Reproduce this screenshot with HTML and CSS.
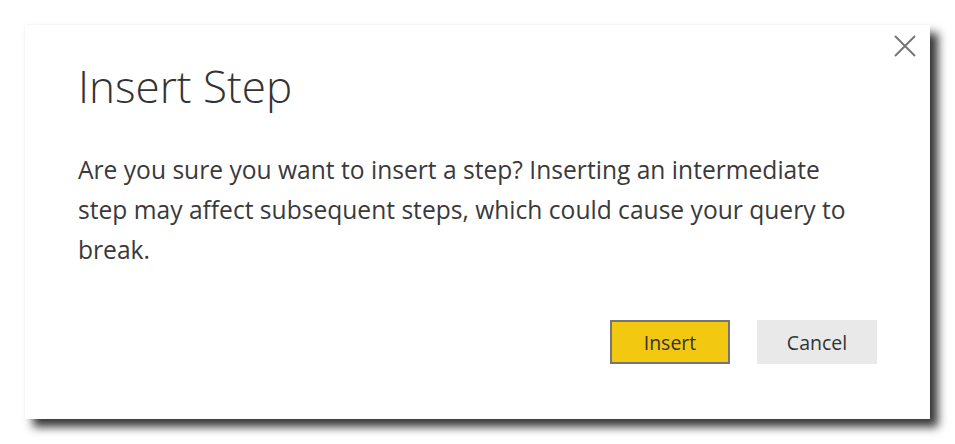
FILE: index.html
```html
<!DOCTYPE html>
<html lang="en">
<head>
<meta charset="utf-8">
<title>Insert Step</title>
<link rel="stylesheet" href="styles.css">
</head>
<body>
<div class="dialog">
  <button class="close" aria-label="Close">
    <svg width="22" height="22" viewBox="0 0 22 22"><path d="M1 1 L21 21 M21 1 L1 21" stroke="#767676" stroke-width="2" fill="none"/></svg>
  </button>
  <h1 class="title">Insert Step</h1>
  <p class="message">Are you sure you want to insert a step? Inserting an intermediate step may affect subsequent steps, which could cause your query to break.</p>
  <div class="actions">
    <button class="btn btn-primary">Insert</button>
    <button class="btn btn-secondary">Cancel</button>
  </div>
</div>
</body>
</html>
```
FILE: styles.css
```css
html, body {
  margin: 0;
  background: #ffffff;
}
body {
  padding: 25px;
  font-family: "Open Sans", "Noto Sans", sans-serif;
  color: #333333;
}
.dialog {
  position: relative;
  box-sizing: border-box;
  width: 905px;
  height: 394px;
  background: #ffffff;
  padding: 0 53px 55px 53px;
  display: flex;
  flex-direction: column;
  box-shadow: 0 0 2px rgba(0,0,0,0.06), 8px 8px 9px rgba(0,0,0,0.78);
}
.close {
  position: absolute;
  top: 10px;
  right: 14px;
  width: 22px;
  height: 22px;
  padding: 0;
  border: 0;
  background: transparent;
}
.close svg { display: block; }
.title {
  margin: 31px 0 0 0;
  font-weight: 300;
  font-size: 44px;
  line-height: 60px;
  color: #333333;
}
.message {
  margin: 34px 0 0 0;
  font-size: 24.6px;
  line-height: 40px;
  color: #3a3a3a;
  max-width: 790px;
}
.actions {
  margin-top: auto;
  display: flex;
  justify-content: flex-end;
  gap: 27px;
}
.btn {
  box-sizing: border-box;
  width: 120px;
  height: 44px;
  font-family: inherit;
  font-size: 19.5px;
  color: #333333;
  padding: 0;
}
.btn-primary {
  background: #f2c811;
  border: 2px solid #757575;
}
.btn-secondary {
  background: #e9e9e9;
  border: 0;
}
```
